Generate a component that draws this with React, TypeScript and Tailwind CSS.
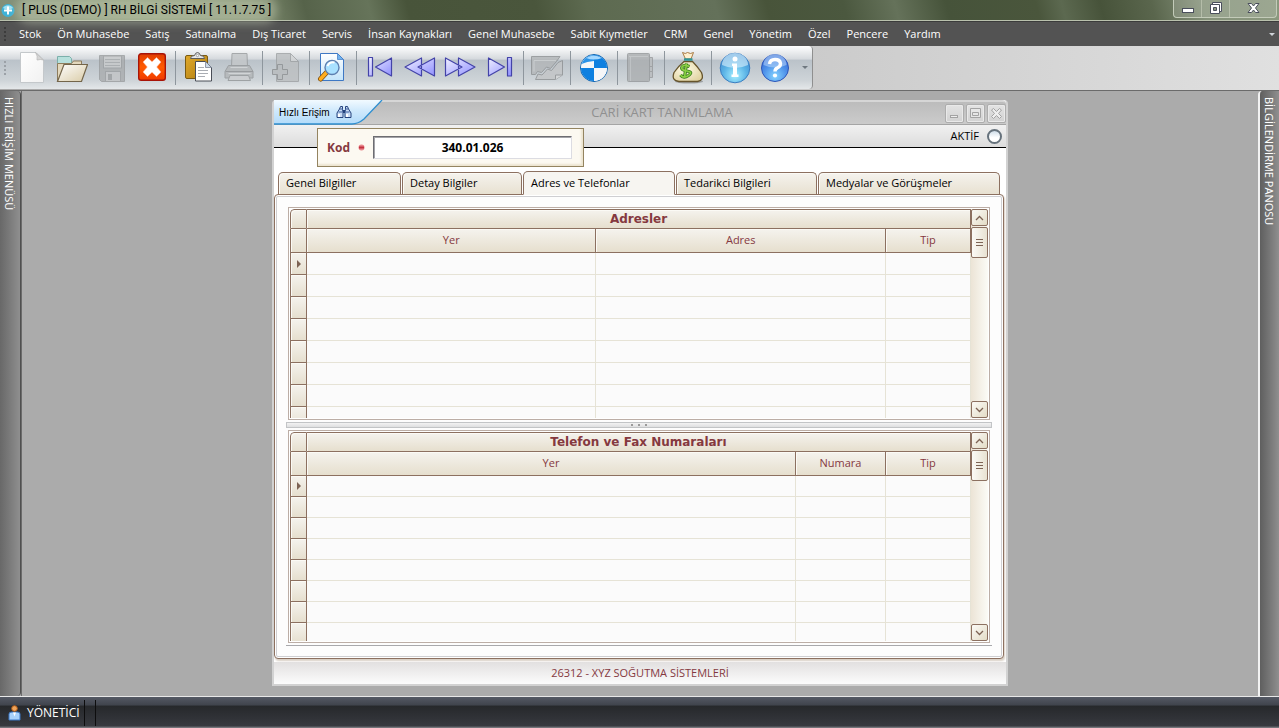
import React from 'react';

const menuItems = [
  'Stok', 'Ön Muhasebe', 'Satış', 'Satınalma', 'Dış Ticaret', 'Servis', 'İnsan Kaynakları',
  'Genel Muhasebe', 'Sabit Kıymetler', 'CRM', 'Genel', 'Yönetim', 'Özel', 'Pencere', 'Yardım',
];

// Shared gradients for the toolbar drawings
function IconDefs() {
  return (
    <svg width="0" height="0" className="absolute" aria-hidden="true">
      <defs>
        <linearGradient id="paper" x1="0" y1="0" x2="1" y2="1">
          <stop offset="0" stopColor="#ffffff" />
          <stop offset="1" stopColor="#f1f1f1" />
        </linearGradient>
        <linearGradient id="folder" x1="0" y1="0" x2="1" y2="1">
          <stop offset="0" stopColor="#ffffff" />
          <stop offset="1" stopColor="#d9cba6" />
        </linearGradient>
        <linearGradient id="orange" x1="0" y1="0" x2="0" y2="1">
          <stop offset="0" stopColor="#e03c00" />
          <stop offset="0.5" stopColor="#ff5a00" />
          <stop offset="1" stopColor="#f03a00" />
        </linearGradient>
        <linearGradient id="violet" x1="0" y1="0" x2="1" y2="1">
          <stop offset="0" stopColor="#f0f0ff" />
          <stop offset="1" stopColor="#8f8fff" />
        </linearGradient>
        <linearGradient id="gold" x1="0" y1="0" x2="1" y2="1">
          <stop offset="0" stopColor="#e0a92c" />
          <stop offset="1" stopColor="#b07d10" />
        </linearGradient>
        <linearGradient id="skyPage" x1="0" y1="0" x2="0" y2="1">
          <stop offset="0" stopColor="#ffffff" />
          <stop offset="1" stopColor="#c3e4fa" />
        </linearGradient>
        <radialGradient id="infoBall" cx="0.5" cy="0.75" r="0.65">
          <stop offset="0" stopColor="#a8efff" />
          <stop offset="0.6" stopColor="#5cb4e6" />
          <stop offset="1" stopColor="#4593d4" />
        </radialGradient>
        <radialGradient id="helpBall" cx="0.5" cy="0.8" r="0.7">
          <stop offset="0" stopColor="#86d4ff" />
          <stop offset="0.6" stopColor="#4f93ea" />
          <stop offset="1" stopColor="#3a6fd8" />
        </radialGradient>
        <radialGradient id="bag" cx="0.4" cy="0.4" r="0.7">
          <stop offset="0" stopColor="#fffbe6" />
          <stop offset="1" stopColor="#e0d2a0" />
        </radialGradient>
      </defs>
    </svg>
  );
}

const icons = {
  newFile: (
    <>
      <path d="M4.500 .5h15.500l7.500 7.500v22.500h-23z" fill="url(#paper)" stroke="#c4c8cb" />
      <path d="M19.500 .5q2.500 3.500 1.500 7.500q4-1 6.500 0z" fill="#d5d5d5" stroke="#b4b4b4" strokeWidth=".7" />
    </>
  ),
  open: (
    <>
      <path d="M1.500 29.500v-25h12l2 2v8H6z" fill="#b7e0dc" stroke="#7bb0ab" />
      <path d="M1.500 29.500V11.500h14l2-2.500h8v6" fill="#e3d8bd" stroke="#8d7c5c" />
      <path d="M1.500 29.500L8 12.500h23.500L25.500 29.500z" fill="url(#folder)" stroke="#73654a" strokeWidth="1.200" />
    </>
  ),
  save: (
    <>
      <path d="M3.500 3.500h25v26h-23l-2-2z" fill="#a9acae" stroke="#999c9e" />
      <rect x="7.500" y="4" width="18" height="12" fill="#c8cacb" stroke="#999c9e" />
      <path d="M9 7.500h15M9 10.500h15M9 13.500h15" stroke="#a7aaac" />
      <rect x="9.500" y="19.500" width="15" height="10" fill="#c2c4c6" stroke="#999c9e" />
      <rect x="12" y="22" width="4" height="6" fill="#999c9e" />
    </>
  ),
  close: (
    <>
      <rect x="2.700" y="1.700" width="26.600" height="26.600" rx="2.500" fill="url(#orange)" stroke="#a81408" strokeWidth="1.400" />
      <path d="M7 10l4.500-4.500 4.500 4.300 4.500-4.300 4.500 4.500-4.300 5 4.300 5-4.500 4.500-4.500-4.300-4.500 4.300-4.500-4.500 4.300-5z" fill="#fff" stroke="#ffb99a" strokeWidth=".5" />
    </>
  ),
  paste: (
    <>
      <rect x="2.500" y="3.500" width="22" height="23" rx="1.500" fill="url(#gold)" stroke="#7a5a12" />
      <path d="M7.500 6.500q0-3 4-3 1-3 3-3t3 3q4 0 4 3z" fill="#e6e6e6" stroke="#5d5d5d" />
      <circle cx="14.500" cy="3.500" r="1.200" fill="#fff" stroke="#777" strokeWidth=".6" />
      <path d="M12.500 9.500h10l6 6v13.500h-16z" fill="#fff" stroke="#4a4e57" />
      <path d="M22.500 9.500v6h6z" fill="#cdd9e8" stroke="#6d7787" strokeWidth=".7" />
      <path d="M15 15.500h6M15 18.500h10M15 21.500h10M15 24.500h7" stroke="#a9adb3" />
    </>
  ),
  print: (
    <>
      <path d="M8.500 15L9 1.500h15l.5 13.500z" fill="#c4c7c9" stroke="#979a9c" />
      <path d="M5.500 13.500h21l3.500 6v6.500h-28v-6.500z" fill="#b2b5b7" stroke="#939698" />
      <path d="M2.500 19.500h27.500" stroke="#8d9092" />
      <path d="M5.500 21.500h22M7.500 15.500h17" stroke="#d4d6d7" />
      <path d="M7 23.500h18.500l2 5h-22.500z" fill="#cbcdcf" stroke="#939698" />
    </>
  ),
  addFile: (
    <>
      <path d="M6.500 1.500h14l8 8v20h-22z" fill="#bcbfc1" stroke="#9da0a2" />
      <path d="M20.500 1.500v8h8z" fill="#d3d5d6" stroke="#9da0a2" />
      <path d="M2.500 17.500h5v-5h5v5h5v5h-5v5h-5v-5h-5z" fill="#b8bbbd" stroke="#8a8d8f" />
    </>
  ),
  search: (
    <>
      <path d="M3.500 1.500h17l6 6v21h-23z" fill="url(#skyPage)" stroke="#3e78c4" />
      <path d="M20.500 1.500v6h6z" fill="#72b4ef" stroke="#3e78c4" strokeWidth=".7" />
      <path d="M9.500 20.500l-6 6.500" stroke="#7d5013" strokeWidth="5" strokeLinecap="round" />
      <path d="M9.500 20.500l-6 6.500" stroke="#ffad1f" strokeWidth="3.500" strokeLinecap="round" />
      <circle cx="15" cy="15.500" r="7" fill="#a9e1ff" stroke="#5d7fb0" strokeWidth="1.400" />
      <path d="M10.500 14q2-4.500 7-3.500" stroke="#fff" strokeWidth="2" fill="none" />
    </>
  ),
  first: (
    <g fill="url(#violet)" stroke="#4343a8" strokeWidth="1.200" strokeLinejoin="round">
      <path d="M4.500 5.500h4v18.500h-4zM27.500 6v18L11.500 15z" />
    </g>
  ),
  prev: (
    <g fill="url(#violet)" stroke="#4343a8" strokeWidth="1.200" strokeLinejoin="round">
      <path d="M17.500 6v18L1 15zM30.500 6v18L14 15z" />
    </g>
  ),
  next: (
    <g fill="url(#violet)" stroke="#4343a8" strokeWidth="1.200" strokeLinejoin="round">
      <path d="M14.500 6v18L31 15zM1.500 6v18L18 15z" />
    </g>
  ),
  last: (
    <g fill="url(#violet)" stroke="#4343a8" strokeWidth="1.200" strokeLinejoin="round">
      <path d="M23.500 5.500h4v18.500h-4zM4.500 6v18L20.500 15z" />
    </g>
  ),
  chart: (
    <>
      <path d="M.5 4.500h28.500l-3.500 5-6 7-4-1.500-5 5.500-4-1-2 3h-4z" fill="#b3b6b8" stroke="#8d9092" />
      <path d="M3 8.500h22M3 8.500v11" stroke="#cdd0d1" fill="none" />
      <path d="M31.500 8.500v14.500l-7 4.500h-20l2.500-5.500 4 1 5.500-6 4 1.500 6.500-8z" fill="#c3c5c7" stroke="#8d9092" />
      <path d="M24.500 27.500v-4.500h7" fill="#d5d7d8" stroke="#8d9092" />
    </>
  ),
  propeller: (
    <>
      <circle cx="16" cy="16" r="13.500" fill="#f1f4f7" stroke="#0b62b0" />
      <path d="M16 16V3a13 13 0 0 0-13 13zM16 16v13a13 13 0 0 0 13-13z" fill="#f5f6f8" />
      <path d="M16 16V3a13 13 0 0 1 13 13zM16 16v13a13 13 0 0 1-13-13z" fill="#0f80e0" />
      <path d="M3.500 12a13 13 0 0 1 12.500-9v6q-7 .5-12.500 3z" fill="#2b93e8" />
      <path d="M8 6q8-5 16 0-8 3-16 0z" fill="#a5d8ff" />
    </>
  ),
  book: (
    <>
      <path d="M24.500 5.500h3v9h-3M24.500 14.500h3v5h-3M24.500 19.500h3v6h-3" fill="#b9bcbe" stroke="#97999b" />
      <rect x="2.500" y="1.500" width="22" height="28" rx="1" fill="#abaeb0" stroke="#939698" />
      <path d="M4 4.500h19M5.500 5v24" stroke="#bec1c3" />
    </>
  ),
  money: (
    <>
      <ellipse cx="17" cy="29.500" rx="14" ry="2" fill="#000" opacity=".25" />
      <path d="M10.500 .5q3 2 5 0 3 2 6 0l-2.500 6.500h-5.500z" fill="#fff0cf" stroke="#a97b45" />
      <path d="M12 9.500h8.500q5 5 9 11 3 8-4 9H7q-8-1-5-9 4-6 10-11z" fill="url(#bag)" stroke="#66542c" strokeWidth="1.300" />
      <path d="M12 7.500h8.500" stroke="#2c9496" strokeWidth="2.400" />
      <path d="M17.500 14.500q-6-2.500-7.500 .5t5 4 1.500 4.500-8-.5M14.500 11.500l-2 14" fill="none" stroke="#347819" strokeWidth="3.200" />
      <path d="M17.500 14.500q-6-2.500-7.500 .5t5 4 1.500 4.500-8-.5M14.500 11.500l-2 14" fill="none" stroke="#8bcf45" strokeWidth="1.700" />
    </>
  ),
  info: (
    <>
      <circle cx="16" cy="16" r="14.800" fill="url(#infoBall)" stroke="#3b7dc0" />
      <path d="M3 13a13 12 0 0 1 26 0q-13 6-26 0z" fill="#d4edfb" opacity=".65" />
      <circle cx="16" cy="7" r="2.500" fill="#fff" />
      <path d="M13 11.500h5v11h1.500v2.500h-7v-2.500H14v-8.500h-1z" fill="#fff" />
    </>
  ),
  help: (
    <>
      <circle cx="16" cy="16" r="13.500" fill="url(#helpBall)" stroke="#2c55b8" />
      <path d="M4.500 13a11.500 11 0 0 1 23 0q-11.500 5-23 0z" fill="#bcd8fa" opacity=".55" />
      <path d="M10.500 12q.5-4.500 5.500-4.500t5.500 4q0 3-3 4.300-2.500 1-2.500 3.700" fill="none" stroke="#fff" strokeWidth="3.400" />
      <circle cx="16" cy="23.500" r="2.100" fill="#fff" />
    </>
  ),
};

type IconName = keyof typeof icons;

const toolGroups: { icon: IconName; label: string; disabled?: boolean }[][] = [
  [
    { icon: 'newFile', label: 'Yeni' },
    { icon: 'open', label: 'Aç' },
    { icon: 'save', label: 'Kaydet', disabled: true },
    { icon: 'close', label: 'Kapat' },
  ],
  [
    { icon: 'paste', label: 'Yapıştır' },
    { icon: 'print', label: 'Yazdır', disabled: true },
  ],
  [{ icon: 'addFile', label: 'Ekle', disabled: true }],
  [{ icon: 'search', label: 'Ara' }],
  [
    { icon: 'first', label: 'İlk' },
    { icon: 'prev', label: 'Önceki' },
    { icon: 'next', label: 'Sonraki' },
    { icon: 'last', label: 'Son' },
  ],
  [{ icon: 'chart', label: 'Grafik', disabled: true }],
  [{ icon: 'propeller', label: 'Merkez' }],
  [{ icon: 'book', label: 'Defter', disabled: true }],
  [{ icon: 'money', label: 'Kasa' }],
  [
    { icon: 'info', label: 'Bilgi' },
    { icon: 'help', label: 'Yardım' },
  ],
];

function Grip({ color }: { color: string }) {
  return (
    <div className="flex w-1 flex-col gap-0.5">
      <i className={`size-0.5 ${color}`} />
      <i className={`size-0.5 ${color}`} />
      <i className={`size-0.5 ${color}`} />
      <i className={`size-0.5 ${color}`} />
    </div>
  );
}

function TitleBar() {
  return (
    <header className="relative flex h-[21px] shrink-0 items-center border-b border-[#b9c1ad] bg-[linear-gradient(75deg,#828f78_0%,#8d9a7a_12%,#7f8c70_20%,#56634a_24%,#66745a_29%,#48543a_32%,#4a563c_42%,#5d6a50_46%,#64715a_56%,#48543a_60%,#4b583f_66%,#65725a_70%,#46533a_74%,#4a563c_81%,#5c6950_83%,#47533a_86%,#5a664d_90%,#85927a_94%,#8b987e_100%)] pl-px">
      <svg width="15" height="15" viewBox="0 0 15 15" aria-hidden="true">
        <circle cx="7" cy="7.500" r="6.500" fill="#3fb2d6" />
        <path d="M2 5a6 6 0 0 1 10 0q-5 3-10 0z" fill="#a3e2f3" />
        <path d="M7 3.500v8M3 7.500h8" stroke="#fff" strokeWidth="2" />
      </svg>
      <h1 className="ml-1.5 rounded-full bg-[#d2dcc0]/40 font-['Roboto'] text-xs text-black shadow-[0_0_8px_6px_rgba(210,220,192,0.4)]">
        [ PLUS (DEMO) ] RH BİLGİ SİSTEMİ [ 11.1.7.75 ]
      </h1>
      <div className="mr-0.5 ml-auto flex h-[18px] self-start rounded-b border border-t-0 border-[#c3cbb9] bg-white/15">
        <button aria-label="Küçült" className="flex w-7 items-center justify-center border-r border-[#b5bda9]">
          <svg width="12" height="12" viewBox="0 0 12 12"><rect x=".5" y="5.500" width="11" height="4" fill="#fff" stroke="#4a4f5c" /></svg>
        </button>
        <button aria-label="Geri yükle" className="flex w-7 items-center justify-center border-r border-[#b5bda9] pb-0.5">
          <svg width="12" height="12" viewBox="0 0 12 12" fill="#fff" stroke="#4a4f5c">
            <path d="M2.500 .5h9v9h-9z" />
            <path d="M.5 2.500h9v9h-9z" />
            <path d="M3.500 5.500h3v3h-3z" fill="#8b987e" />
          </svg>
        </button>
        <button aria-label="Kapat" className="flex w-[46px] items-center justify-center pb-0.5">
          <svg width="13" height="12" viewBox="0 0 13 12">
            <path d="M1 1.500h3.500l2 2.500 2-2.500H12L8.500 6l3.500 4.500H8.500l-2-2.500-2 2.500H1L4.500 6z" fill="#fff" stroke="#4a4f5c" />
          </svg>
        </button>
      </div>
    </header>
  );
}

function MenuBar() {
  return (
    <nav className="flex h-[25px] shrink-0 items-center border-t border-[#3b3b3b] bg-[#535353] px-1">
      <Grip color="bg-[#3c3c3c]" />
      <ul className="ml-[11px] flex gap-4 text-[11px] whitespace-nowrap text-white">
        {menuItems.map((item) => (
          <li key={item}>
            <a href="#">{item}</a>
          </li>
        ))}
      </ul>
      <span className="ml-auto border-x-[3px] border-t-[3px] border-x-transparent border-t-[#cfd3d8]" />
    </nav>
  );
}

function Toolbar() {
  return (
    <div className="flex h-11 shrink-0 bg-linear-to-r from-[#a8a8a8] to-[#e0e0e0]">
      <div className="flex h-[43px] items-center rounded-r border-r border-[#8f8f8f] bg-[linear-gradient(#ffffff_0%,#d4d8dc_31%,#bac2c9_32%,#ced4d8_80%,#e4e7e9_100%)] pl-1">
        <Grip color="bg-[#9ba1a7]" />
        <div className="ml-1 flex items-center">
          {toolGroups.map((group, i) => (
            <React.Fragment key={group[0].icon}>
              {i > 0 && <span className="mx-[3px] h-[34px] w-px bg-[#8e969d]" />}
              {group.map((tool) => (
                <button
                  key={tool.icon}
                  aria-label={tool.label}
                  disabled={tool.disabled}
                  className="flex h-10 w-10 items-center justify-center disabled:opacity-80"
                >
                  <svg width="32" height="32" viewBox="0 0 32 32">{icons[tool.icon]}</svg>
                </button>
              ))}
            </React.Fragment>
          ))}
        </div>
        <span className="mr-1 ml-[7px] border-x-[3px] border-t-[3px] border-x-transparent border-t-[#6f7880]" />
      </div>
    </div>
  );
}

function ScrollBar() {
  const button = 'flex h-[17px] items-center justify-center rounded-xs border border-[#8c7060] bg-linear-to-br from-[#fbfaf6] to-[#e3dcc6]';
  return (
    <div className="flex w-[17px] shrink-0 flex-col bg-linear-to-r from-[#ece4d6] to-[#fbfbf6]">
      <button aria-label="Yukarı kaydır" className={button}>
        <svg width="9" height="6" viewBox="0 0 9 6"><path d="M1 5l3.500-3.500L8 5" fill="none" stroke="#7d6354" strokeWidth="1.300" /></svg>
      </button>
      <div className="mt-px flex h-[31px] flex-col items-center justify-center gap-0.5 rounded-xs border border-[#8c7060] bg-linear-to-r from-[#fbfaf6] to-[#e8e2d2]">
        <i className="h-px w-[7px] bg-[#7d6354]" />
        <i className="h-px w-[7px] bg-[#7d6354]" />
        <i className="h-px w-[7px] bg-[#7d6354]" />
      </div>
      <button aria-label="Aşağı kaydır" className={`mt-auto ${button}`}>
        <svg width="9" height="6" viewBox="0 0 9 6"><path d="M1 1l3.500 3.500L8 1" fill="none" stroke="#7d6354" strokeWidth="1.300" /></svg>
      </button>
    </div>
  );
}

interface DataGridProps {
  title: string;
  columns: { name: string; width: string }[];
  rowHeight: string;
}

function DataGrid({ title, columns, rowHeight }: DataGridProps) {
  const head = 'border-b border-[#8c7060] bg-linear-to-b from-[#f5f3ee] to-[#e6dfce] shadow-[inset_1px_1px_0_#fbfaf5]';
  return (
    <div className="mx-0.5 flex min-h-0 flex-1 border border-[#bcaea6] bg-white p-px">
      <div className="min-w-0 flex-1 overflow-hidden rounded-tl">
        <table className="w-full table-fixed border-separate border-spacing-0 bg-[#fbfbfb] text-[11px] text-[#85393f]">
          <colgroup>
            <col className="w-[17px]" />
            {columns.map((col) => (
              <col key={col.name} className={col.width} />
            ))}
          </colgroup>
          <thead>
            <tr className="h-5">
              <th className={`rounded-tl border-x border-t p-0 ${head}`} />
              <th colSpan={columns.length} className={`border-t border-r p-0 font-['DejaVu_Sans'] text-xs leading-[18px] font-bold ${head}`}>
                {title}
              </th>
            </tr>
            <tr className="h-6">
              <th className={`border-x p-0 ${head}`} />
              {columns.map((col) => (
                <th key={col.name} className={`border-r p-0 font-normal ${head}`}>{col.name}</th>
              ))}
            </tr>
          </thead>
          <tbody>
            {Array.from({ length: 8 }, (_, row) => (
              <tr key={row} className={rowHeight}>
                <th className={`border-x p-0 ${head}`}>
                  {row === 0 && <span className="mx-auto block w-1 border-y-4 border-l-4 border-y-transparent border-l-[#7d6354]" />}
                </th>
                {columns.map((col) => (
                  <td key={col.name} className="border-r border-b border-[#e6e3d6] p-0" />
                ))}
              </tr>
            ))}
          </tbody>
        </table>
      </div>
      <ScrollBar />
    </div>
  );
}

const tabs = [
  { name: 'Genel Bilgiller', width: 'w-[123px]' },
  { name: 'Detay Bilgiler', width: 'w-[120px]' },
  { name: 'Adres ve Telefonlar', width: 'w-[152px]' },
  { name: 'Tedarikci Bilgileri', width: 'w-[141px]' },
  { name: 'Medyalar ve Görüşmeler', width: 'w-[182px]' },
];

function CardWindow() {
  const frameButton = 'flex size-[19px] items-center justify-center rounded-xs border border-[#adadad] bg-linear-to-b from-[#e3e3e3] to-[#d2d2d2] shadow-[inset_0_0_0_1px_#e9e9e9]';
  return (
    <section className="mx-auto flex w-full max-w-[736px] flex-col rounded-t border-x-2 border-b-2 border-[#d2d2d2] bg-white">
      <div className="relative flex h-[25px] shrink-0 items-center justify-end gap-0.5 rounded-t border-t-2 border-b border-t-[#d6d6d6] border-b-[#a5a5a5] bg-linear-to-b from-[#bcbcbc] to-[#cbcbcb]">
        <h2 className="absolute inset-x-0 pr-12 pl-[92px] text-center text-[13px] text-[#909090]">CARİ KART TANIMLAMA</h2>
        <button aria-label="Simge durumu" className={frameButton}>
          <svg width="11" height="11" viewBox="0 0 11 11"><rect x="1.500" y="7.500" width="7" height="2" fill="#eee" stroke="#a3a3a3" /></svg>
        </button>
        <button aria-label="Ekranı kapla" className={frameButton}>
          <svg width="11" height="11" viewBox="0 0 11 11" fill="#e6e6e6" stroke="#a3a3a3"><path d="M.5 .5h10v9H.5zM2.500 4.500h6v3h-6z" /></svg>
        </button>
        <button aria-label="Pencereyi kapat" className={frameButton}>
          <svg width="11" height="11" viewBox="0 0 11 11"><path d="M.5 2L2.500.5l3 3 3-3L10.500 2l-3 3.500 3 3-2 2-3-3-3 3-2-2 3-3z" fill="#eee" stroke="#a3a3a3" /></svg>
        </button>
        <div className="absolute -top-0.5 left-0 h-[25px] w-[109px]">
          <svg className="absolute inset-0" width="109" height="25" viewBox="0 0 109 25" aria-hidden="true">
            <defs>
              <linearGradient id="quick" x1="0" y1="0" x2="0" y2="1">
                <stop offset="0" stopColor="#f2faff" />
                <stop offset="0.45" stopColor="#cfe9fc" />
                <stop offset="1" stopColor="#b2dbfa" />
              </linearGradient>
            </defs>
            <path d="M0 0h108L90 19q-6 5-12 5H0z" fill="url(#quick)" />
            <path d="M108 0L90 19q-6 5-12 5H0" fill="none" stroke="#2f8fd0" strokeWidth="1.300" />
          </svg>
          <a href="#" className="relative flex h-6 items-center gap-1.5 pl-[5px] font-['Liberation_Sans'] text-[10px] whitespace-nowrap text-black">
            Hızlı Erişim
            <svg width="16" height="14" viewBox="0 0 16 14" aria-hidden="true">
              <path d="M4.500 1.500h2v3l.5 2.500v5.500h-6V8l2.500-4zM9.500 1.500h2l1 2.500L15 8v4.500H9V7l.5-2.500z" fill="#c9dcf5" stroke="#24427c" />
              <path d="M7 5h2v3H7z" fill="#24427c" />
              <path d="M4 4h3M9 4h3M2.500 7h4M9.500 7h4" stroke="#3a5c9c" />
              <path d="M2 9h2v3H2zM10 9h2v3h-2z" fill="#fff" />
            </svg>
          </a>
        </div>
      </div>

      <div className="relative flex h-[23px] shrink-0 items-center justify-end border-b border-black bg-linear-to-b from-[#f1f1f1] to-[#dcdcdc] pr-1">
        <label htmlFor="aktif" className="mr-2 text-[11px] text-black">AKTİF</label>
        <input
          id="aktif"
          type="radio"
          className="size-[15px] appearance-none rounded-full border-2 border-[#66727c] bg-linear-to-b from-[#cfdde8] to-white to-60%"
        />
        <div className="absolute top-[3px] left-[43px] flex h-[39px] w-[267px] items-center border border-[#948460] bg-[#fcf9f1] pr-[11px] pl-[9px] shadow-[inset_-2px_-2px_2px_#ece4d0]">
          <label htmlFor="kod" className="text-xs font-bold text-[#85393f]">Kod</label>
          <svg width="7" height="7" viewBox="0 0 7 7" className="ml-2" aria-hidden="true">
            <circle cx="3.500" cy="3.500" r="3" fill="#e8868c" />
            <path d="M1 2.500h5v2H1z" fill="#c3313f" />
          </svg>
          <input
            id="kod"
            defaultValue="340.01.026"
            className="ml-2 h-[23px] min-w-0 flex-1 border border-t-[#6d6d72] border-r-[#dcdce2] border-b-[#dcdce2] border-l-[#6d6d72] bg-white text-center text-xs font-bold text-black shadow-[inset_1px_1px_0_#a4a4a8]"
          />
        </div>
      </div>

      <div className="flex min-h-0 flex-1 flex-col pt-[23px] pr-[2px] pb-[3px]">
        <div role="tablist" className="flex shrink-0 items-end gap-px pl-1">
          {tabs.map((tab, i) => (
            <button
              key={tab.name}
              role="tab"
              aria-selected={i === 2}
              className={`${tab.width} rounded-t-[5px] border border-[#8c7060] pl-[7px] text-left text-[11px] whitespace-nowrap text-black ${
                i === 2
                  ? 'relative z-10 -mb-px h-6 border-b-[#f7f5f1] bg-[#f7f5f1]'
                  : 'h-[22px] border-b-0 bg-linear-to-b from-[#f5f3ee] to-[#e8e1d1] shadow-[inset_1px_1px_0_#fbfaf5]'
              }`}
            >
              {tab.name}
            </button>
          ))}
        </div>
        <div className="flex min-h-0 flex-1 flex-col rounded border border-[#8c7060] bg-[#fdfdfd] px-[11px] pt-3 pb-3 shadow-[inset_0_0_0_1px_#fff,inset_0_0_0_2px_#cfcfd2,1px_2px_2px_#d8cfc4]">
          <DataGrid
            title="Adresler"
            rowHeight="h-[22px]"
            columns={[
              { name: 'Yer', width: 'w-auto' },
              { name: 'Adres', width: 'w-auto' },
              { name: 'Tip', width: 'w-[85px]' },
            ]}
          />
          <div className="my-0.5 flex h-1.5 shrink-0 items-center justify-center gap-[5px] border border-[#c2c4c6] bg-linear-to-b from-[#f2f2f2] to-[#dedfe0]">
            <i className="size-0.5 bg-[#9a9a9a]" />
            <i className="size-0.5 bg-[#9a9a9a]" />
            <i className="size-0.5 bg-[#9a9a9a]" />
          </div>
          <DataGrid
            title="Telefon ve Fax Numaraları"
            rowHeight="h-[21px]"
            columns={[
              { name: 'Yer', width: 'w-auto' },
              { name: 'Numara', width: 'w-[90px]' },
              { name: 'Tip', width: 'w-[85px]' },
            ]}
          />
          <div className="mt-0.5 border-b border-[#a9a9ac]" />
        </div>
      </div>

      <footer className="flex h-[22px] shrink-0 items-center justify-center bg-linear-to-b from-[#e2e0e0] to-[#fcfcfc] text-[11px] text-[#85393f]">
        26312 - XYZ SOĞUTMA SİSTEMLERİ
      </footer>
    </section>
  );
}

export default function App() {
  return (
    <div className="flex h-screen min-h-[480px] flex-col overflow-hidden bg-[#ababab] font-['Open_Sans','Noto_Sans',sans-serif]">
      <IconDefs />
      <TitleBar />
      <MenuBar />
      <Toolbar />

      <main className="flex min-h-0 flex-1 border-t border-[#6b6b6b]">
        <aside className="w-[21px] shrink-0 rounded-tr rounded-br border-r border-[#4f4f4f] bg-linear-to-r from-[#686868] to-[#8f8f8f] pt-1.5 pl-px">
          <button className="text-[11px] leading-4 whitespace-nowrap text-white [writing-mode:vertical-rl]">HIZLI ERİŞİM MENÜSÜ</button>
        </aside>
        <div className="flex min-w-0 flex-1 border-l border-[#6b6b6b] px-1 pt-[9px] pb-2.5">
          <CardWindow />
        </div>
        <aside className="w-[21px] shrink-0 rounded-tl border-l-2 border-[#f2f2f2] bg-linear-to-r from-[#5f5f5f] to-[#8f8f8f] pt-1.5 pl-px">
          <button className="text-[11px] leading-4 whitespace-nowrap text-white [writing-mode:vertical-rl]">BİLGİLENDİRME PANOSU</button>
        </aside>
      </main>

      <footer className="flex h-8 shrink-0 items-center border-t border-[#e8e8e8] bg-[linear-gradient(#545964_0%,#3f434c_27%,#26282b_28%,#37393f_93%,#85858a_100%)] pl-2 text-xs text-white">
        <svg width="13" height="16" viewBox="0 0 13 16" aria-hidden="true">
          <path d="M1 15V9q0-2 3-2h5q3 0 3 2v6z" fill="#a9d2fb" stroke="#3d78c6" />
          <path d="M5 7.500h3l-1.500 4z" fill="#fff" />
          <circle cx="6.500" cy="3.500" r="2.800" fill="#f0a45a" stroke="#b05d17" />
        </svg>
        <span className="ml-1.5">YÖNETİCİ</span>
        <span className="ml-1 h-[26px] border-l border-[#0d0d0e]" />
        <span className="ml-2.5 h-[26px] border-l border-[#0d0d0e]" />
      </footer>
    </div>
  );
}
